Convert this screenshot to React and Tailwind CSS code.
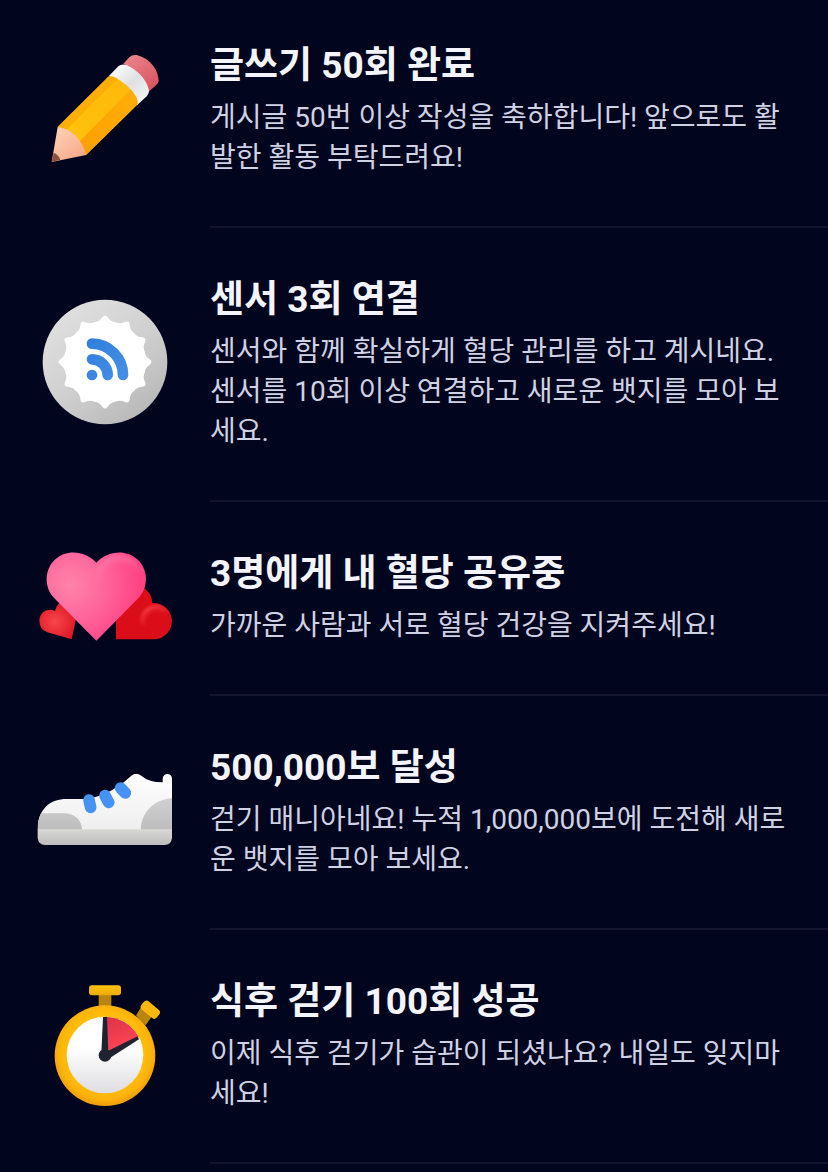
import React from "react";

const PencilIcon = () => (
  <svg viewBox="0 18 450 450" className="w-[150px] h-[150px]" aria-hidden="true">
    <defs>
      <linearGradient id="pencilEraser" x1="300" y1="80" x2="370" y2="180" gradientUnits="userSpaceOnUse">
        <stop offset="0" stopColor="#e9828a" />
        <stop offset="1" stopColor="#d9525d" />
      </linearGradient>
      <linearGradient id="pencilFerrule" x1="250" y1="110" x2="350" y2="210" gradientUnits="userSpaceOnUse">
        <stop offset="0" stopColor="#ffffff" />
        <stop offset="0.5" stopColor="#dfe0e2" />
        <stop offset="1" stopColor="#f4f4f4" />
      </linearGradient>
      <linearGradient id="pencilWood" x1="85" y1="300" x2="150" y2="385" gradientUnits="userSpaceOnUse">
        <stop offset="0" stopColor="#ffcdb3" />
        <stop offset="1" stopColor="#f6ab8a" />
      </linearGradient>
      <linearGradient id="pencilBody" x1="240" y1="150" x2="100" y2="320" gradientUnits="userSpaceOnUse">
        <stop offset="0" stopColor="#ffb90a" />
        <stop offset="1" stopColor="#ffc20c" />
      </linearGradient>
      <linearGradient id="pencilSide" x1="320" y1="220" x2="160" y2="370" gradientUnits="userSpaceOnUse">
        <stop offset="0" stopColor="#ffac08" />
        <stop offset="1" stopColor="#ff9f02" />
      </linearGradient>
    </defs>
    <path d="M280 101 L298 82 Q306 73 320 75 Q352 83 370 108 Q386 130 386 153 Q385 160 378 166 L355 186 Q320 120 280 101Z" fill="url(#pencilEraser)" />
    <path d="M236 139 L265 109 Q276 100 291 106 Q345 133 357 181 Q358 190 351 198 L321 226 Q290 160 236 139Z" fill="url(#pencilFerrule)" />
    <path d="M83 291 L235 140 Q250 134 290 166 Q325 200 323 223 L168 375 L100 335Z" fill="url(#pencilBody)" />
    <path d="M83 291 L235 140 Q245 136 262 146 L103 305Z" fill="#fbad08" />
    <path d="M148 335 L302 178 Q326 206 323 223 L168 375Z" fill="url(#pencilSide)" />
    <path d="M83 291 Q112 294 136 316 Q160 342 168 375 L65 396Z" fill="url(#pencilWood)" />
    <path d="M71 368 Q84 373 91 389 L65 396Z" fill="#8d4f40" />
  </svg>
);

const SensorIcon = () => (
  <svg viewBox="0 0 450 450" className="w-[150px] h-[150px]" aria-hidden="true">
    <defs>
      <linearGradient id="sensorRing" x1="110" y1="70" x2="340" y2="370" gradientUnits="userSpaceOnUse">
        <stop offset="0" stopColor="#dedede" />
        <stop offset="0.5" stopColor="#d0d0d1" />
        <stop offset="1" stopColor="#b9b9ba" />
      </linearGradient>
      <linearGradient id="sensorWave" x1="170" y1="150" x2="290" y2="270" gradientUnits="userSpaceOnUse">
        <stop offset="0" stopColor="#2f80dd" />
        <stop offset="1" stopColor="#468fe6" />
      </linearGradient>
    </defs>
    <circle cx="225" cy="216" r="187" fill="url(#sensorRing)" />
    {/* 톱니 모양 (12개) */}
    <g transform="translate(225 216)" fill="#ffffff">
      <circle r="122" />
      {[0, 30, 60, 90, 120, 150, 180, 210, 240, 270, 300, 330].map((deg) => (
        <path
          key={deg}
          transform={`rotate(${deg})`}
          d="M-32 -119 Q-17 -120 -8 -134 Q0 -145 8 -134 Q17 -120 32 -119 L20 -90 L-20 -90Z"
        />
      ))}
    </g>
    <circle cx="186" cy="255" r="16" fill="#3a86e0" />
    <path d="M186 208 A47 47 0 0 1 233 255" fill="none" stroke="url(#sensorWave)" strokeWidth="32" strokeLinecap="round" />
    <path d="M186 161 A94 94 0 0 1 279 255" fill="none" stroke="url(#sensorWave)" strokeWidth="32" strokeLinecap="round" />
  </svg>
);

const HeartsIcon = () => (
  <svg viewBox="0 -18 450 450" className="w-[150px] h-[150px]" aria-hidden="true">
    <defs>
      <radialGradient id="heartPink" cx="120" cy="165" r="210" gradientUnits="userSpaceOnUse">
        <stop offset="0" stopColor="#ff83aa" />
        <stop offset="0.5" stopColor="#ff659b" />
        <stop offset="1" stopColor="#fd4384" />
      </radialGradient>
      <radialGradient id="heartPinkGlow" cx="268" cy="148" r="80" gradientUnits="userSpaceOnUse">
        <stop offset="0.5" stopColor="#ff86ae" stopOpacity="0" />
        <stop offset="0.8" stopColor="#ff86ae" stopOpacity="0.5" />
        <stop offset="1" stopColor="#ff86ae" stopOpacity="0" />
      </radialGradient>
      <linearGradient id="heartPinkFade" x1="262" y1="75" x2="285" y2="165" gradientUnits="userSpaceOnUse">
        <stop offset="0" stopColor="#ffffff" />
        <stop offset="0.8" stopColor="#000000" />
      </linearGradient>
      <mask id="heartPinkMask">
        <rect x="180" y="50" width="190" height="190" fill="url(#heartPinkFade)" />
      </mask>
      <radialGradient id="heartSmall" cx="75" cy="275" r="70" gradientUnits="userSpaceOnUse">
        <stop offset="0" stopColor="#f8444c" />
        <stop offset="1" stopColor="#dc1622" />
      </radialGradient>
      <radialGradient id="heartRedGlow" cx="378" cy="272" r="54" gradientUnits="userSpaceOnUse">
        <stop offset="0.4" stopColor="#ff4a50" stopOpacity="0" />
        <stop offset="0.75" stopColor="#ff4a50" stopOpacity="0.65" />
        <stop offset="1" stopColor="#ff4a50" stopOpacity="0" />
      </radialGradient>
      <linearGradient id="heartRedFade" x1="345" y1="225" x2="375" y2="285" gradientUnits="userSpaceOnUse">
        <stop offset="0.2" stopColor="#ffffff" />
        <stop offset="0.9" stopColor="#000000" />
      </linearGradient>
      <mask id="heartRedMask">
        <rect x="300" y="210" width="140" height="130" fill="url(#heartRedFade)" />
      </mask>
    </defs>
    <path d="M125 328 L52 307 Q27 298 28 270 Q32 240 60 239 Q70 239 75 243 Q82 215 108 211 Q148 214 140 258Z" fill="url(#heartSmall)" />
    <path d="M258 328 L258 222 A54 54 0 0 1 367 219 A54 54 0 0 1 375 328Z" fill="#da0d19" />
    <circle cx="375" cy="273" r="54" fill="url(#heartRedGlow)" mask="url(#heartRedMask)" />
    <path d="M199 98 C170 66 114 54 76 88 C43 118 41 172 73 205 L199 332 L325 205 C357 172 355 118 322 88 C284 54 228 66 199 98Z" fill="url(#heartPink)" />
    <path d="M199 98 C228 66 284 54 322 88 C355 118 357 172 325 205 L288 242 L180 242 L180 98Z" fill="url(#heartPinkGlow)" mask="url(#heartPinkMask)" />
  </svg>
);

const ShoeIcon = () => (
  <svg viewBox="0 -36 450 450" className="w-[150px] h-[150px]" aria-hidden="true">
    <defs>
      <linearGradient id="shoeBody" x1="0" y1="70" x2="0" y2="240" gradientUnits="userSpaceOnUse">
        <stop offset="0" stopColor="#ffffff" />
        <stop offset="1" stopColor="#eeeeee" />
      </linearGradient>
      <linearGradient id="shoePatch" x1="0" y1="145" x2="0" y2="240" gradientUnits="userSpaceOnUse">
        <stop offset="0" stopColor="#d0d0d0" />
        <stop offset="1" stopColor="#bdbdbd" />
      </linearGradient>
      <linearGradient id="shoeSole" x1="0" y1="238" x2="0" y2="285" gradientUnits="userSpaceOnUse">
        <stop offset="0" stopColor="#d8d8d6" />
        <stop offset="1" stopColor="#bdbdbb" />
      </linearGradient>
      <clipPath id="shoeClip">
        <path d="M23 240 C23 175 62 147 110 147 L165 147 Q220 140 262 110 Q284 96 304 77 Q318 66 334 77 Q355 96 398 97 L398 86 Q400 72 413 72 Q426 74 426 87 L426 240Z" />
      </clipPath>
    </defs>
    <g clipPath="url(#shoeClip)">
      <rect x="20" y="65" width="410" height="180" fill="url(#shoeBody)" />
      <path d="M20 240 L20 190 L100 190 C135 190 155 210 156 240Z" fill="url(#shoePatch)" />
      <path d="M430 144 C370 147 333 190 332 240 L430 240Z" fill="url(#shoePatch)" />
    </g>
    <path d="M23 238 L426 238 L426 264 Q424 285 404 285 L45 285 Q25 284 23 264Z" fill="url(#shoeSole)" />
    <g fill="none" stroke="#4592f2" strokeWidth="35" strokeLinecap="round">
      <path d="M177 150 L182 172" />
      <path d="M225 137 L236 157" />
      <path d="M272 114 L286 129" />
    </g>
  </svg>
);

const StopwatchIcon = () => (
  <svg viewBox="0 6 450 450" className="w-[150px] h-[150px]" aria-hidden="true">
    <defs>
      <radialGradient id="watchRim" cx="225" cy="248" r="160" gradientUnits="userSpaceOnUse">
        <stop offset="0.72" stopColor="#ffbd0b" />
        <stop offset="0.88" stopColor="#fdb20a" />
        <stop offset="1" stopColor="#ef9d08" />
      </radialGradient>
      <linearGradient id="watchFace" x1="0" y1="140" x2="0" y2="370" gradientUnits="userSpaceOnUse">
        <stop offset="0.4" stopColor="#ffffff" />
        <stop offset="1" stopColor="#dedee2" />
      </linearGradient>
      <linearGradient id="watchButton" x1="0" y1="45" x2="0" y2="76" gradientUnits="userSpaceOnUse">
        <stop offset="0" stopColor="#ffc414" />
        <stop offset="1" stopColor="#edac04" />
      </linearGradient>
      <linearGradient id="watchRed" x1="240" y1="140" x2="280" y2="240" gradientUnits="userSpaceOnUse">
        <stop offset="0" stopColor="#dd3348" />
        <stop offset="1" stopColor="#ff4655" />
      </linearGradient>
    </defs>
    <path d="M206 72 H244 V112 H206Z" fill="#b9850c" />
    <rect x="177" y="46" width="96" height="30" rx="9" fill="url(#watchButton)" />
    <path d="M333 112 L366 139 L347 166 L318 136Z" fill="#b9850c" />
    <rect x="-30" y="-16" width="60" height="32" rx="11" transform="translate(361 119) rotate(40)" fill="#f9b90c" />
    <circle cx="225" cy="257" r="151" fill="url(#watchRim)" />
    <circle cx="225" cy="255" r="115" fill="url(#watchFace)" />
    <path d="M225 255 L225 140 Q292 142 326 200Z" fill="url(#watchRed)" />
    <path d="M219 141 L231 141 L235 250 L214 250Z" fill="#202232" />
    <path d="M323 199 L327 208 L236 266 L226 247Z" fill="#202232" />
    <circle cx="225" cy="256" r="19" fill="#202232" />
  </svg>
);

const badges = [
  {
    id: "writing",
    icon: PencilIcon,
    title: "글쓰기 50회 완료",
    description: "게시글 50번 이상 작성을 축하합니다! 앞으로도 활발한 활동 부탁드려요!",
  },
  {
    id: "sensor",
    icon: SensorIcon,
    title: "센서 3회 연결",
    description: "센서와 함께 확실하게 혈당 관리를 하고 계시네요. 센서를 10회 이상 연결하고 새로운 뱃지를 모아 보세요.",
  },
  {
    id: "share",
    icon: HeartsIcon,
    title: "3명에게 내 혈당 공유중",
    description: "가까운 사람과 서로 혈당 건강을 지켜주세요!",
  },
  {
    id: "steps",
    icon: ShoeIcon,
    title: "500,000보 달성",
    description: "걷기 매니아네요! 누적 1,000,000보에 도전해 새로운 뱃지를 모아 보세요.",
  },
  {
    id: "walk",
    icon: StopwatchIcon,
    title: "식후 걷기 100회 성공",
    description: "이제 식후 걷기가 습관이 되셨나요? 내일도 잊지마세요!",
  },
];

const BadgeItem = ({ icon: Icon, title, description }) => (
  <li className="flex items-center">
    <div className="w-[210px] shrink-0 flex justify-center">
      <Icon />
    </div>
    <div className="flex-1 min-w-0 pt-12 pb-12 pr-10 border-b-2 border-[#10152e]">
      <h2 className="text-[37px] leading-[48px] font-bold text-[#f3f4fd]">{title}</h2>
      <p className="mt-2 text-[28px] leading-[40px] text-[#cfd1e4]">{description}</p>
    </div>
  </li>
);

const App = () => {
  return (
    <main
      lang="ko"
      className="min-h-screen overflow-hidden bg-[#01051d] font-[Roboto,'Noto_Sans_CJK_KR',sans-serif]"
    >
      {/* 뱃지 목록 (위로 살짝 스크롤된 상태) */}
      <ul className="-mt-[6px]">
        {badges.map((badge) => (
          <BadgeItem key={badge.id} {...badge} />
        ))}
      </ul>
    </main>
  );
};

export default App;
